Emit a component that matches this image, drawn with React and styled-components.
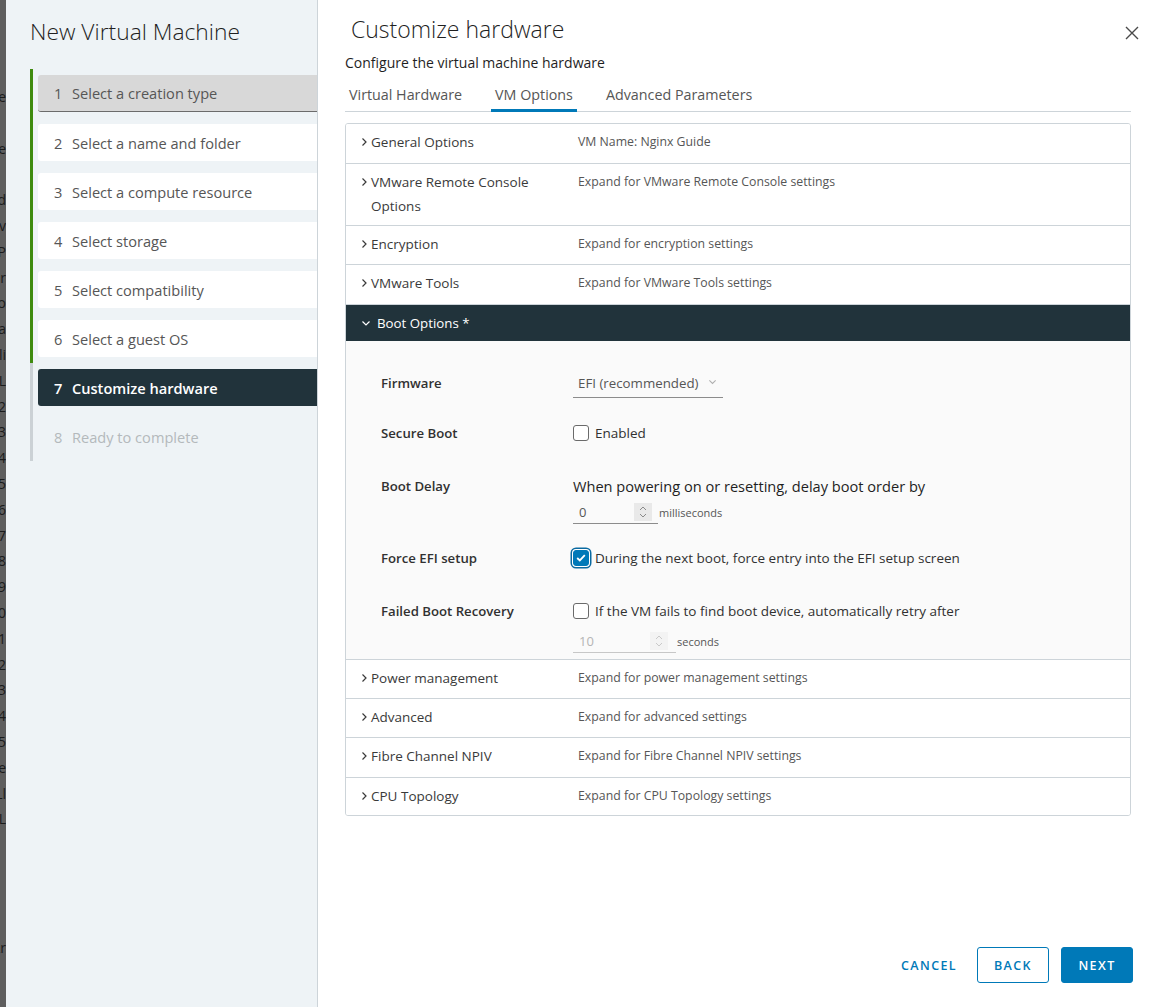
import React from 'react';
import styled, { createGlobalStyle } from 'styled-components';

const GlobalStyle = createGlobalStyle`
  html, body {
    margin: 0;
    padding: 0;
    height: 100%;
  }
  body {
    font-family: "Open Sans", "Noto Sans", sans-serif;
    color: #313131;
  }
  #root {
    height: 100%;
  }
`;

const Screen = styled.div`
  display: flex;
  flex-flow: row nowrap;
  width: 1155px;
  height: 1007px;
  overflow: hidden;
`;

const Backdrop = styled.div`
  width: 6px;
  flex: none;
  background: #5e5e5e;
  overflow: hidden;
  padding-top: 84px;
  box-sizing: border-box;
`;

const BackdropLine = styled.div`
  height: 25.8px;
  font-size: 14px;
  line-height: 25.8px;
  color: #1b1b1b;
  white-space: nowrap;
  direction: rtl;
  text-align: right;
  width: 6px;
`;

const Sidebar = styled.aside`
  width: 312px;
  flex: none;
  background: #eef3f6;
  border-right: 1px solid #cdd4d9;
  box-sizing: border-box;
  padding-left: 24px;
`;

const SidebarTitle = styled.h1`
  margin: 0;
  padding-top: 17px;
  height: 69px;
  box-sizing: border-box;
  font-size: 22.8px;
  font-weight: 300;
  line-height: 30px;
  color: #1f1f1f;
`;

const StepList = styled.ol`
  list-style: none;
  margin: 0;
  padding: 0;
`;

const StepSlot = styled.li`
  height: 49px;
  box-sizing: border-box;
  padding: 6px 0 6px 5px;
  border-left: 3px solid ${p => (p.$done ? '#3f8b0f' : '#cbd1d5')};
`;

const StepBox = styled.div`
  height: 37px;
  display: flex;
  align-items: center;
  padding-left: 16px;
  border-radius: 3px 0 0 3px;
  font-size: 14.6px;
  box-sizing: border-box;
  background: ${p =>
    p.$state === 'first' ? '#d8d8d8' :
    p.$state === 'active' ? '#21333b' :
    p.$state === 'todo' ? 'transparent' : '#ffffff'};
  border-bottom: ${p => (p.$state === 'first' ? '1px solid #6b6b6b' : 'none')};
  color: ${p =>
    p.$state === 'active' ? '#ffffff' :
    p.$state === 'todo' ? '#b4b9bc' : '#565656'};
  font-weight: ${p => (p.$state === 'active' ? 600 : 400)};
`;

const StepNum = styled.span`
  width: 18px;
  flex: none;
`;

const Main = styled.main`
  flex: 1;
  display: flex;
  flex-direction: column;
  background: #ffffff;
  padding: 0 24px 24px 27px;
  box-sizing: border-box;
  min-width: 0;
`;

const HeaderRow = styled.div`
  display: flex;
  align-items: flex-start;
  justify-content: space-between;
  height: 52px;
  padding-top: 14px;
  box-sizing: border-box;
`;

const PageTitle = styled.h2`
  margin: 0 0 0 6px;
  font-size: 23px;
  font-weight: 300;
  color: #1f1f1f;
  line-height: 30px;
`;

const CloseButton = styled.button`
  border: 0;
  background: none;
  padding: 0;
  width: 24px;
  height: 24px;
  display: flex;
  align-items: center;
  justify-content: center;
  margin-right: -13px;
  margin-top: 7px;
  cursor: pointer;
`;

const Subtitle = styled.p`
  margin: 0;
  font-size: 14px;
  line-height: 22px;
  color: #1f1f1f;
`;

const Tabs = styled.div`
  display: flex;
  gap: 25px;
  margin-top: 7px;
  border-bottom: 1px solid #cdd4d9;
  height: 30px;
`;

const Tab = styled.div`
  padding: 0 4px;
  font-size: 14.3px;
  line-height: 28px;
  color: #565656;
  border-bottom: 3px solid ${p => (p.$active ? '#0079b8' : 'transparent')};
  margin-bottom: -1px;
`;

const Stack = styled.div`
  margin-top: 11px;
  border: 1px solid #cdd4d9;
  border-radius: 3px;
  overflow: hidden;
`;

const StackRow = styled.div`
  display: flex;
  align-items: flex-start;
  min-height: ${p => p.$h || 39}px;
  border-top: ${p => (p.$first ? 'none' : '1px solid #cdd4d9')};
  background: #ffffff;
`;

const StackLabel = styled.div`
  width: 232px;
  flex: none;
  display: flex;
  align-items: flex-start;
  padding: 6px 0 6px 15px;
  box-sizing: border-box;
  font-size: 13.5px;
  line-height: 24px;
  color: #3a3a3a;
`;

const Chevron = styled.span`
  width: 10px;
  height: 24px;
  flex: none;
  display: flex;
  align-items: center;
`;

const LabelText = styled.span`
  width: 180px;
`;

const StackValue = styled.div`
  padding-top: 6px;
  font-size: 12.3px;
  line-height: 24px;
  color: #565656;
`;

const OpenHeader = styled.div`
  display: flex;
  align-items: center;
  height: 36px;
  background: #21333b;
  border-top: 1px solid #cdd4d9;
  padding-left: 15px;
  font-size: 13.3px;
  color: #ffffff;
  gap: 6px;
`;

const OpenBody = styled.div`
  background: #fafafa;
  padding: 27px 0 6px 35px;
`;

const Field = styled.div`
  display: flex;
  align-items: flex-start;
  margin-top: ${p => p.$gap || 0}px;
`;

const FieldLabel = styled.div`
  width: 192px;
  flex: none;
  font-size: 13.2px;
  font-weight: 600;
  color: #313131;
  line-height: ${p => p.$lh || 24}px;
`;

const FieldBody = styled.div`
  display: flex;
  flex-direction: column;
  gap: ${p => p.$gap || 0}px;
`;

const InlineRow = styled.div`
  display: flex;
  align-items: center;
  gap: 5px;
  height: ${p => p.$h || 24}px;
  font-size: 13.5px;
  color: #313131;
`;

const Lead = styled.div`
  font-size: 14.6px;
  line-height: 22px;
  color: #1f1f1f;
`;

const Select = styled.div`
  width: 150px;
  height: 30px;
  box-sizing: border-box;
  border-bottom: 1px solid #8c8c8c;
  display: flex;
  align-items: center;
  justify-content: space-between;
  padding: 0 6px 0 5px;
  font-size: 13.3px;
  color: #565656;
`;

const Check = styled.span`
  width: 16px;
  height: 16px;
  box-sizing: border-box;
  flex: none;
  border-radius: 3px;
  border: 1px solid ${p => (p.$checked ? '#0079b8' : '#6a6a6a')};
  background: ${p => (p.$checked ? '#0079b8' : '#ffffff')};
  display: flex;
  align-items: center;
  justify-content: center;
  box-shadow: ${p => (p.$checked ? '0 0 0 1px #ffffff, 0 0 0 2.5px #0a6aa1' : 'none')};
  margin-right: 1px;
`;

const NumberBox = styled.div`
  width: ${p => p.$w}px;
  height: 24px;
  box-sizing: border-box;
  border-bottom: 1px solid ${p => (p.$disabled ? '#c7c7c7' : '#8c8c8c')};
  display: flex;
  align-items: center;
  justify-content: space-between;
  padding: 0 ${p => p.$pr}px 0 6px;
  font-size: 13px;
  color: ${p => (p.$disabled ? '#b5b5b5' : '#565656')};
`;

const Spinner = styled.span`
  width: 18px;
  height: 18px;
  background: ${p => (p.$disabled ? '#f3f3f3' : '#e9e9e9')};
  display: flex;
  align-items: center;
  justify-content: center;
`;

const Unit = styled.span`
  font-size: 11px;
  color: #565656;
  margin-left: -4px;
`;

const Footer = styled.div`
  margin-top: auto;
  display: flex;
  justify-content: flex-end;
  gap: 12px;
  margin-right: -2px;
`;

const Button = styled.button`
  width: 72px;
  height: 36px;
  box-sizing: border-box;
  border-radius: 3px;
  font-family: inherit;
  font-size: 12.5px;
  font-weight: 600;
  letter-spacing: 1.4px;
  cursor: pointer;
  padding: 0;
  border: 1px solid ${p => (p.$kind === 'flat' ? 'transparent' : '#0079b8')};
  background: ${p => (p.$kind === 'primary' ? '#0079b8' : 'transparent')};
  color: ${p => (p.$kind === 'primary' ? '#ffffff' : '#0079b8')};
`;

const ChevronRight = () => (
  <svg width="7" height="10" viewBox="0 0 7 10">
    <path d="M1.5 1.5 L5 5 L1.5 8.5" fill="none" stroke="#3a3a3a" strokeWidth="1.2" />
  </svg>
);

const ChevronDown = ({ color = '#ffffff', size = 10 }) => (
  <svg width={size} height={size * 0.7} viewBox="0 0 10 7">
    <path d="M1.5 1.5 L5 5 L8.5 1.5" fill="none" stroke={color} strokeWidth="1.2" />
  </svg>
);

const SpinIcon = ({ color }) => (
  <svg width="8" height="14" viewBox="0 0 8 14">
    <path d="M1 5 L4 2 L7 5 M1 9 L4 12 L7 9" fill="none" stroke={color} strokeWidth="1" />
  </svg>
);

const backdropLines = [
  'Lre', '', 'Are', '', 'Ld', 'Lv', 'LP', 'Lor', 'Loo', 'La', 'Lli', 'L.',
  'L2', 'L3', 'L4', 'L5', 'L6', 'L7', 'L8', 'L9', 'L0', 'L1', 'L2', 'L3', 'L4', 'L5', 'Le', 'Ll', 'L.',
  '', '', '', '', 'Lr'
];

const steps = [
  { n: 1, label: 'Select a creation type', state: 'first', done: true },
  { n: 2, label: 'Select a name and folder', state: 'done', done: true },
  { n: 3, label: 'Select a compute resource', state: 'done', done: true },
  { n: 4, label: 'Select storage', state: 'done', done: true },
  { n: 5, label: 'Select compatibility', state: 'done', done: true },
  { n: 6, label: 'Select a guest OS', state: 'done', done: true },
  { n: 7, label: 'Customize hardware', state: 'active', done: false },
  { n: 8, label: 'Ready to complete', state: 'todo', done: false },
];

const topRows = [
  { label: 'General Options', value: 'VM Name: Nginx Guide' },
  { label: 'VMware Remote Console Options', value: 'Expand for VMware Remote Console settings', h: 61 },
  { label: 'Encryption', value: 'Expand for encryption settings', h: 38 },
  { label: 'VMware Tools', value: 'Expand for VMware Tools settings' },
];

const bottomRows = [
  { label: 'Power management', value: 'Expand for power management settings', h: 38 },
  { label: 'Advanced', value: 'Expand for advanced settings', h: 38 },
  { label: 'Fibre Channel NPIV', value: 'Expand for Fibre Channel NPIV settings', h: 39 },
  { label: 'CPU Topology', value: 'Expand for CPU Topology settings', h: 37 },
];

const Row = ({ label, value, first, h }) => (
  <StackRow $first={first} $h={h}>
    <StackLabel>
      <Chevron><ChevronRight /></Chevron>
      <LabelText>{label}</LabelText>
    </StackLabel>
    <StackValue>{value}</StackValue>
  </StackRow>
);

export default function App() {
  return (
    <>
      <GlobalStyle />
      <Screen>
        <Backdrop>
          {backdropLines.map((l, i) => (
            <BackdropLine key={i}>{l}</BackdropLine>
          ))}
        </Backdrop>

        <Sidebar>
          <SidebarTitle>New Virtual Machine</SidebarTitle>
          <StepList>
            {steps.map(s => (
              <StepSlot key={s.n} $done={s.done}>
                <StepBox $state={s.state}>
                  <StepNum>{s.n}</StepNum>
                  {s.label}
                </StepBox>
              </StepSlot>
            ))}
          </StepList>
        </Sidebar>

        <Main>
          <HeaderRow>
            <PageTitle>Customize hardware</PageTitle>
            <CloseButton aria-label="Close">
              <svg width="14" height="14" viewBox="0 0 14 14">
                <path d="M1 1 L13 13 M13 1 L1 13" stroke="#4a4a4a" strokeWidth="1.4" />
              </svg>
            </CloseButton>
          </HeaderRow>
          <Subtitle>Configure the virtual machine hardware</Subtitle>

          <Tabs>
            <Tab>Virtual Hardware</Tab>
            <Tab $active>VM Options</Tab>
            <Tab>Advanced Parameters</Tab>
          </Tabs>

          <Stack>
            {topRows.map((r, i) => (
              <Row key={r.label} first={i === 0} {...r} />
            ))}

            <OpenHeader>
              <ChevronDown />
              Boot Options *
            </OpenHeader>
            <OpenBody>
              <Field>
                <FieldLabel $lh={30}>Firmware</FieldLabel>
                <Select>
                  EFI (recommended)
                  <ChevronDown color="#b0b0b0" size={9} />
                </Select>
              </Field>

              <Field $gap={20}>
                <FieldLabel $lh={30}>Secure Boot</FieldLabel>
                <InlineRow $h={30}>
                  <Check />
                  Enabled
                </InlineRow>
              </Field>

              <Field $gap={27}>
                <FieldLabel $lh={22}>Boot Delay</FieldLabel>
                <FieldBody $gap={3}>
                  <Lead>When powering on or resetting, delay boot order by</Lead>
                  <InlineRow>
                    <NumberBox $w={85} $pr={6}>
                      0
                      <Spinner><SpinIcon color="#8a8a8a" /></Spinner>
                    </NumberBox>
                    <Unit>milliseconds</Unit>
                  </InlineRow>
                </FieldBody>
              </Field>

              <Field $gap={22}>
                <FieldLabel>Force EFI setup</FieldLabel>
                <InlineRow>
                  <Check $checked>
                    <svg width="10" height="8" viewBox="0 0 10 8">
                      <path d="M1.2 4 L3.8 6.4 L8.8 1.2" fill="none" stroke="#ffffff" strokeWidth="1.8" />
                    </svg>
                  </Check>
                  During the next boot, force entry into the EFI setup screen
                </InlineRow>
              </Field>

              <Field $gap={29}>
                <FieldLabel>Failed Boot Recovery</FieldLabel>
                <FieldBody $gap={6}>
                  <InlineRow>
                    <Check />
                    If the VM fails to find boot device, automatically retry after
                  </InlineRow>
                  <InlineRow>
                    <NumberBox $w={103} $pr={8} $disabled>
                      10
                      <Spinner $disabled><SpinIcon color="#c9c9c9" /></Spinner>
                    </NumberBox>
                    <Unit>seconds</Unit>
                  </InlineRow>
                </FieldBody>
              </Field>
            </OpenBody>

            {bottomRows.map(r => (
              <Row key={r.label} {...r} />
            ))}
          </Stack>

          <Footer>
            <Button $kind="flat">CANCEL</Button>
            <Button $kind="outline">BACK</Button>
            <Button $kind="primary">NEXT</Button>
          </Footer>
        </Main>
      </Screen>
    </>
  );
}
